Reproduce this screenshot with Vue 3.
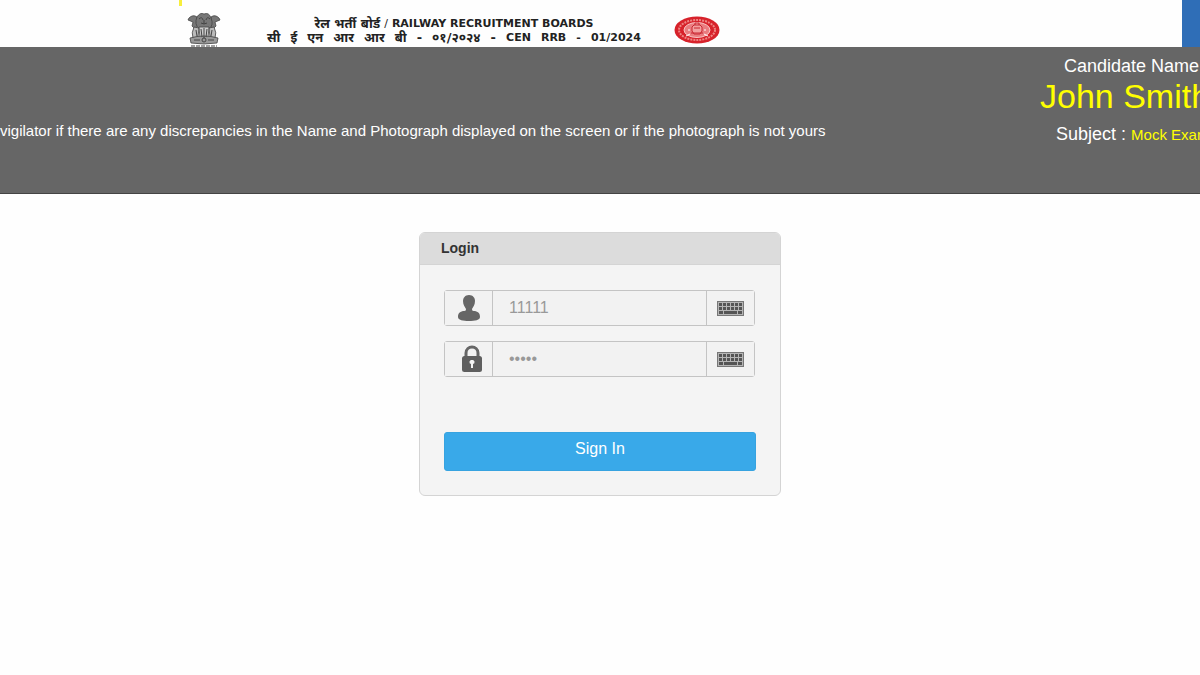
<script setup>
import { ref } from "vue";

const candidate = ref("John Smith");
const subject = ref("Mock Exam");
const userId = ref("");
const password = ref("");
const activeField = ref("");

const hindiLine = ["सी", "ई", "एन", "आर", "आर", "बी", "-", "०१/२०२४", "-"];
const englishLine = ["CEN", "RRB", "-", "01/2024"];

function openKeyboard(name) {
  activeField.value = activeField.value === name ? "" : name;
}
</script>

<template>
  <div class="page">
    <header class="top-bar">
      <span class="marker"></span>
      <svg class="emblem" viewBox="0 0 34 34">
        <g fill="#777" stroke="#444" stroke-width="0.8">
          <path d="M2 5 Q6 1 10 4 L11 13 Q8 17 5 13 L6 9 L1 7Z" />
          <path d="M32 5 Q28 1 24 4 L23 13 Q26 17 29 13 L28 9 L33 7Z" />
          <path d="M10 4 Q13 -1 17 1 Q22 -1 24 5 Q27 12 22 16 L12 16 Q7 11 10 4Z" />
          <path d="M7 14 L12 15 L11 24 L6 25 Q4 20 7 14Z" fill="#bbb" />
          <path d="M27 14 L22 15 L23 24 L28 25 Q30 20 27 14Z" fill="#bbb" />
          <path d="M12 14 L22 14 L21 25 L13 25Z" fill="#ccc" />
          <path d="M3 25 Q17 21 31 25 L30 30 Q17 32 4 30Z" fill="#999" />
        </g>
        <g fill="none" stroke="#444" stroke-width="1">
          <path d="M12 6 Q15 3 16 7 M19 7 Q20 3 23 6 M14 10 Q17 12 20 10 M17 7 V11 M9 17 L10 23 M14 16 L15 24 M17 15 V25 M20 16 L19 24 M25 17 L24 23" />
          <circle cx="17" cy="27" r="2" />
          <path d="M7 27 H13 M21 27 H27" />
          <path d="M4 33 H30" stroke-dasharray="4 1" />
        </g>
      </svg>
      <div class="board">
        <div class="board-name">
          <span class="hindi">रेल भर्ती बोर्ड</span><span class="slash">/</span><span>RAILWAY RECRUITMENT BOARDS</span>
        </div>
        <div class="board-code">
          <span v-for="(word, i) in hindiLine" :key="'h' + i" class="hindi">{{ word }}</span>
          <span v-for="(word, i) in englishLine" :key="'e' + i">{{ word }}</span>
        </div>
      </div>
      <svg class="seal" viewBox="0 0 46 28">
        <ellipse cx="23" cy="14" rx="22.5" ry="13.5" fill="#d7222b" />
        <ellipse cx="23" cy="14" rx="18" ry="10" fill="none" stroke="#ee8583" stroke-width="2" stroke-dasharray="2 1" />
        <ellipse cx="23" cy="14" rx="13" ry="7.5" fill="#ea7d80" stroke="#f9c5c3" />
        <path d="M18 15 V11 L20 9 H26 L28 11 V15 L26 18 H20Z M20 12 H26 M17 17 H29 M21 9 V7 H25 V9" fill="#f3a09f" stroke="#c82630" />
        <path d="M12 20 L16 18 M30 18 L34 20 M14 14 H16 M30 14 H32" stroke="#fff" />
      </svg>
      <span class="blue-block"></span>
    </header>

    <section class="info-bar">
      <p class="notice">vigilator if there are any discrepancies in the Name and Photograph displayed on the screen or if the photograph is not yours</p>
      <div class="candidate">
        <div class="candidate-label">Candidate Name</div>
        <div class="candidate-name">{{ candidate }}</div>
        <div class="subject">Subject : <span>{{ subject }}</span></div>
      </div>
    </section>

    <main>
      <form class="login" @submit.prevent>
        <h1>Login</h1>
        <div class="login-body">
          <div class="field">
            <label for="user-id" aria-label="User ID">
              <svg width="24" height="28" viewBox="0 0 24 28">
                <path d="M12 1 C8 1 6 4 6 7 C6 11 8 13 9 15 C9 17 8 17 6 17 C2 18 1 20 1 23 C1 26 6 27 12 27 C18 27 23 26 23 23 C23 20 22 18 18 17 C16 17 15 17 15 15 C16 13 18 11 18 7 C18 4 16 1 12 1Z" fill="#666" />
              </svg>
            </label>
            <input id="user-id" v-model="userId" type="text" placeholder="11111" />
            <button type="button" aria-label="Keyboard for user ID" @click="openKeyboard('user')">
              <svg width="27" height="15" viewBox="0 0 27 15">
                <rect width="27" height="15" fill="#777" />
                <rect x="1" y="1" width="25" height="13" fill="#b5b5b5" />
                <path d="M2 3.5 H25 M2 7.5 H25" stroke="#555" stroke-width="3" stroke-dasharray="3 1" />
                <path d="M2 11.5 H6 M7 11.5 H20 M21 11.5 H25" stroke="#555" stroke-width="3" />
              </svg>
            </button>
          </div>
          <div class="field">
            <label for="password" class="lock" aria-label="Password">
              <svg width="22" height="28" viewBox="0 0 22 28">
                <path d="M5 12 V8 C5 0 17 0 17 8 V12" fill="none" stroke="#666" stroke-width="3" />
                <rect x="1" y="11" width="20" height="16" rx="2.5" fill="#5f5f5f" />
                <path d="M11 15 A2 2 0 0 0 10 19 V23 H12 V19 A2 2 0 0 0 11 15Z" fill="#f4f4f4" />
              </svg>
            </label>
            <input id="password" v-model="password" type="password" placeholder="•••••" />
            <button type="button" aria-label="Keyboard for password" @click="openKeyboard('password')">
              <svg width="27" height="15" viewBox="0 0 27 15">
                <rect width="27" height="15" fill="#777" />
                <rect x="1" y="1" width="25" height="13" fill="#b5b5b5" />
                <path d="M2 3.5 H25 M2 7.5 H25" stroke="#555" stroke-width="3" stroke-dasharray="3 1" />
                <path d="M2 11.5 H6 M7 11.5 H20 M21 11.5 H25" stroke="#555" stroke-width="3" />
              </svg>
            </button>
          </div>
          <button class="sign-in" type="submit">Sign In</button>
        </div>
      </form>
    </main>
  </div>
</template>

<style>
body {
  background: #fefefe;
}
</style>

<style scoped>
* {
  box-sizing: border-box;
}

.page {
  font-family: "Liberation Sans", Arial, sans-serif;
  overflow: hidden;
}

.top-bar {
  display: flex;
  height: 47px;
  padding-left: 179px;
}

.marker {
  width: 3px;
  height: 6px;
  background: #f7ee3c;
}

.emblem {
  width: 34px;
  height: 34px;
  margin: 13px 0 0 5px;
}

.board {
  width: 374px;
  margin: 17px 0 0 46px;
  color: #222;
  font-family: "DejaVu Sans", "Noto Sans", sans-serif;
  font-size: 11px;
  font-weight: bold;
  line-height: 14px;
  white-space: nowrap;
}

.board-name,
.board-code {
  display: flex;
  height: 14px;
}

.board-name {
  justify-content: center;
  gap: 4px;
}

.board-code {
  justify-content: space-between;
}

.hindi {
  font-size: 13px;
}

.slash {
  font-weight: normal;
}

.seal {
  width: 46px;
  height: 28px;
  margin: 16px 0 0 33px;
}

.blue-block {
  width: 18px;
  margin-left: auto;
  background: #2f6eb7;
}

.info-bar {
  display: flex;
  height: 147px;
  background: #666;
  border-bottom: 1px solid #444;
  color: #fff;
  white-space: nowrap;
}

.notice {
  flex: 1;
  margin: 75px 0 0;
  font-size: 15px;
  line-height: 18px;
}

.candidate {
  width: 160px;
  padding-top: 9px;
  overflow: hidden;
}

.candidate-label {
  padding-left: 24px;
  font-size: 18px;
  line-height: 20px;
}

.candidate-name {
  color: #ff0;
  font-size: 34px;
  line-height: 40px;
}

.subject {
  padding-left: 16px;
  font-size: 18px;
  line-height: 36px;
}

.subject span {
  color: #ff0;
  font-size: 15px;
}

.login {
  width: 362px;
  margin: 38px auto;
  background: #f4f4f4;
  border: 1px solid #d4d4d4;
  border-radius: 6px;
  overflow: hidden;
}

.login h1 {
  margin: 0;
  padding-left: 21px;
  background: #dcdcdc;
  border-bottom: 1px solid #d4d4d4;
  color: #333;
  font-size: 14px;
  line-height: 31px;
}

.login-body {
  padding: 25px 24px 24px;
}

.field {
  display: flex;
  width: 311px;
  height: 36px;
  margin-bottom: 15px;
  border: 1px solid #c4c4c4;
  border-radius: 3px;
}

.field label,
.field button {
  display: flex;
  flex: none;
  align-items: center;
  justify-content: center;
  width: 47px;
  background: #f2f2f2;
}

.field .lock {
  padding-left: 6px;
}

.field input {
  flex: 1;
  min-width: 0;
  padding: 0 16px 1px;
  background: #f2f2f2;
  border: solid #c4c4c4;
  border-width: 0 1px;
  color: #555;
  font-family: inherit;
  font-size: 16px;
}

.field input::placeholder {
  color: #999;
}

.field button {
  padding: 0;
  border: 0;
}

.sign-in {
  width: 100%;
  height: 39px;
  margin-top: 40px;
  padding: 0 0 6px;
  background: #39a9e9;
  border: 1px solid #37a3e0;
  border-radius: 3px;
  color: #fff;
  font-family: inherit;
  font-size: 16px;
}
</style>
